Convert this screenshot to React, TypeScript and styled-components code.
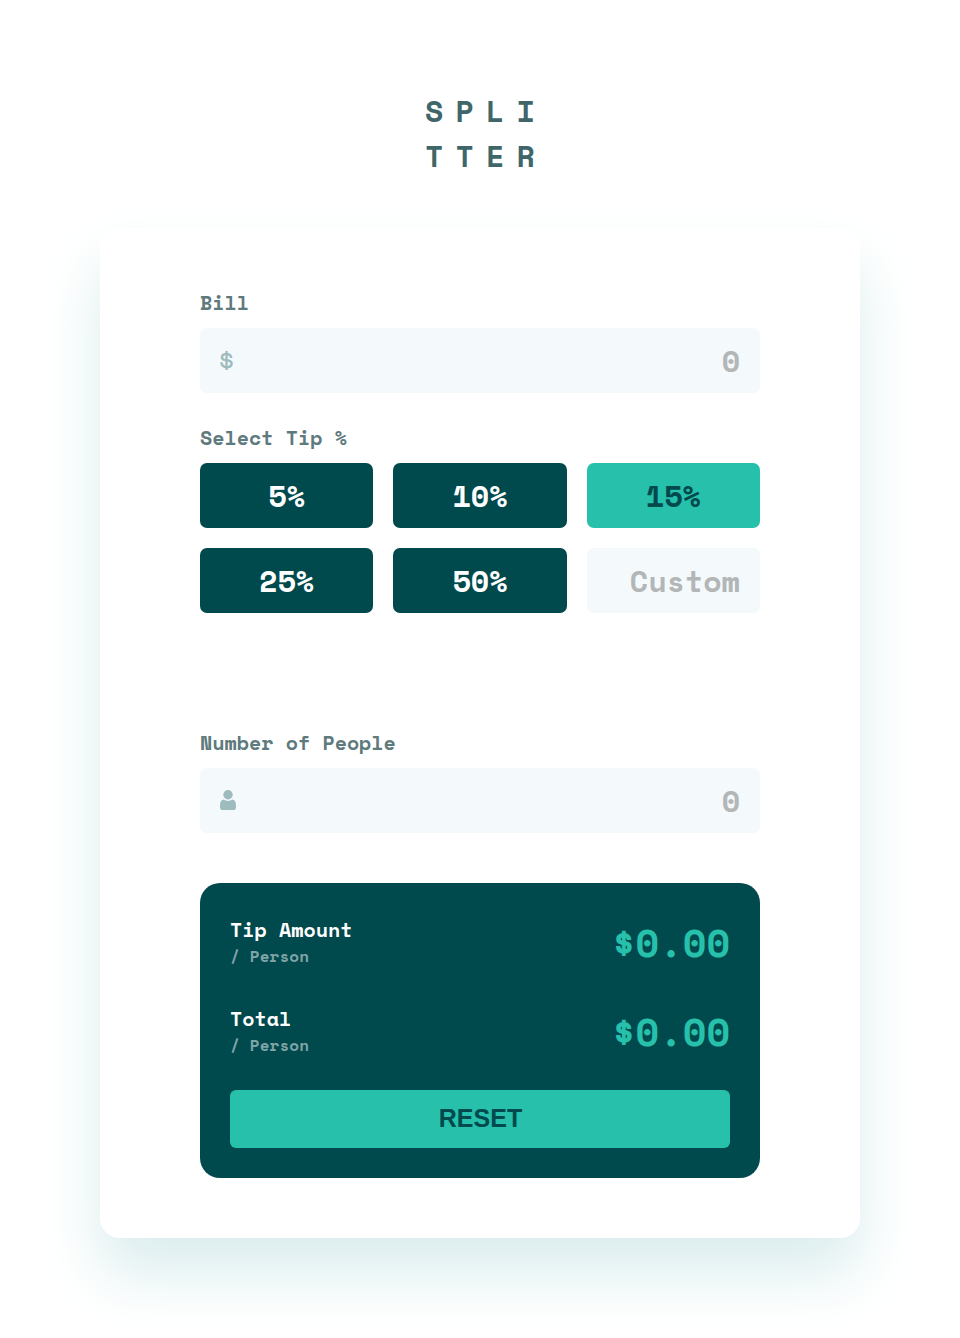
import React, { useState } from "react";
import styled, { createGlobalStyle, css } from "styled-components";

const GlobalStyle = createGlobalStyle`
  *, *::before, *::after { box-sizing: border-box; }
  body {
    margin: 0;
    background: #fff;
    font-family: "Space Mono", "DejaVu Sans Mono", monospace;
    font-weight: 700;
  }
`;

const Page = styled.main`
  display: flex;
  flex-direction: column;
  align-items: center;
  min-height: 1338px;
  padding: 88px 100px 100px;
  overflow: hidden;
`;

const Logo = styled.h1`
  margin: 0 0 50px;
  padding-left: 12px;
  font-size: 30px;
  line-height: 45px;
  letter-spacing: 12.2px;
  color: #3f6668;
  font-weight: 700;
`;

const LogoLine = styled.span`
  display: block;
`;

const Card = styled.section`
  width: 760px;
  padding: 60px 100px;
  border-radius: 20px;
  background: #fff;
  box-shadow: 0 36px 60px #dbedee;
`;

const Field = styled.div<{ $gap: number }>`
  display: flex;
  flex-direction: column;
  gap: 10px;
  margin-bottom: ${(p) => p.$gap}px;
`;

const Label = styled.label`
  font-size: 20px;
  line-height: 30px;
  color: #5e7a7d;
`;

const InputBox = styled.div`
  display: flex;
  align-items: center;
  height: 65px;
  padding: 0 20px;
  border-radius: 7px;
  background: #f4f9fc;
`;

const DollarIcon = styled.span`
  width: 18px;
  margin: 0 0 1px -2.5px;
  font-size: 30px;
  font-weight: 400;
  line-height: 30px;
  color: #9ebbbd;
`;

const inputText = css`
  border: 0;
  outline: 0;
  min-width: 0;
  font: inherit;
  font-size: 30px;
  text-align: right;
  color: #00494d;
  &::placeholder { color: #b3b6b7; opacity: 1; }
`;

const Input = styled.input`
  ${inputText}
  flex: 1;
  height: 44px;
  padding: 0;
  background: transparent;
`;

const TipGrid = styled.div`
  display: grid;
  grid-template-columns: repeat(3, 1fr);
  gap: 20px;
`;

const TipButton = styled.button<{ $active: boolean }>`
  height: 65px;
  padding: 0;
  border: 0;
  border-radius: 7px;
  font: inherit;
  font-size: 30px;
  color: ${(p) => (p.$active ? "#00494d" : "#fff")};
  background: ${(p) => (p.$active ? "#26c0ab" : "#00494d")};
`;

const CustomTip = styled.input`
  ${inputText}
  width: 100%;
  height: 65px;
  padding: 0 20px;
  border-radius: 7px;
  background: #f4f9fc;
`;

const Results = styled.div`
  display: flex;
  flex-direction: column;
  padding: 30px;
  border-radius: 20px;
  background: #00494d;
`;

const ResultRow = styled.div`
  display: flex;
  align-items: center;
  justify-content: space-between;
  height: 59px;
  margin-bottom: 30px;
`;

const ResultName = styled.div`
  font-size: 20px;
  line-height: 29px;
  color: #fff;
`;

const PerPerson = styled.div`
  margin-bottom: 2px;
  font-size: 16px;
  line-height: 24px;
  letter-spacing: 0.1px;
  color: #7fa4a6;
`;

const Amount = styled.div`
  font-size: 38.6px;
  line-height: 59px;
  color: #26c0ab;
`;

const Reset = styled.button`
  height: 58px;
  margin-top: -1px;
  padding: 0 0 2px 1px;
  border: 0;
  border-radius: 6px;
  font: 700 25px "Liberation Sans", Arial, sans-serif;
  color: #00494d;
  background: #26c0ab;
`;

const PersonFigure = styled.svg`
  margin-bottom: 1px;
`;

const PersonIcon = () => (
  <PersonFigure width="16" height="20" viewBox="0 0 16 20" fill="#9ebbbd" aria-hidden="true">
    <ellipse cx="8" cy="4.7" rx="4.7" ry="4.7" />
    <path d="M3.3 9.6Q8 12.5 12.7 9.6Q16 10.8 16 15.5V17.2Q16 20 13.2 20H2.8Q0 20 0 17.2V15.5Q0 10.8 3.3 9.6Z" />
  </PersonFigure>
);

const Result = ({ name }: { name: string }) => (
  <ResultRow>
    <div>
      <ResultName>{name}</ResultName>
      <PerPerson>/ Person</PerPerson>
    </div>
    <Amount>$0.00</Amount>
  </ResultRow>
);

export default function App() {
  const [tip, setTip] = useState(15);
  return (
    <>
      <GlobalStyle />
      <Page>
        <Logo>
          <LogoLine>SPLI</LogoLine>
          <LogoLine>TTER</LogoLine>
        </Logo>
        <Card>
          <Field $gap={30}>
            <Label htmlFor="bill">Bill</Label>
            <InputBox>
              <DollarIcon>$</DollarIcon>
              <Input id="bill" placeholder="0" />
            </InputBox>
          </Field>
          <Field $gap={115}>
            <Label as="div">Select Tip %</Label>
            <TipGrid>
              {[5, 10, 15, 25, 50].map((n) => (
                <TipButton key={n} $active={n === tip} onClick={() => setTip(n)}>
                  {n}%
                </TipButton>
              ))}
              <CustomTip placeholder="Custom" />
            </TipGrid>
          </Field>
          <Field $gap={50}>
            <Label htmlFor="people">Number of People</Label>
            <InputBox>
              <PersonIcon />
              <Input id="people" placeholder="0" />
            </InputBox>
          </Field>
          <Results>
            <Result name="Tip Amount" />
            <Result name="Total" />
            <Reset onClick={() => setTip(15)}>RESET</Reset>
          </Results>
        </Card>
      </Page>
    </>
  );
}
